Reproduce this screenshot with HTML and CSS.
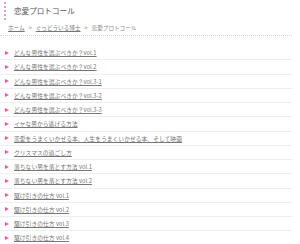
FILE: index.html
```html
<!DOCTYPE html>
<html lang="ja">
<head>
    <meta charset="UTF-8">
    <title>恋愛プロトコール</title>
    <link rel="stylesheet" href="styles.css">
</head>
<body>
    <div class="page">
        <h1 class="cat-title">恋愛プロトコール</h1>

        <div class="breadcrumb">
            <a href="#">ホーム</a>
            <span class="sep">&gt;</span>
            <a href="#">ぐっどういる博士</a>
            <span class="sep">&gt;</span>
            <span class="current">恋愛プロトコール</span>
        </div>

        <ul class="posts">
            <li><a href="#">どんな男性を選ぶべきか？vol.1</a></li>
            <li><a href="#">どんな男性を選ぶべきか？vol.2</a></li>
            <li><a href="#">どんな男性を選ぶべきか？vol.3-1</a></li>
            <li><a href="#">どんな男性を選ぶべきか？vol.3-2</a></li>
            <li><a href="#">どんな男性を選ぶべきか？vol.3-3</a></li>
            <li><a href="#">イヤな男から逃げる方法</a></li>
            <li><a href="#">恋愛をうまくいかせる本、人生をうまくいかせる本、そして映画</a></li>
            <li><a href="#">クリスマスの過ごし方</a></li>
            <li><a href="#">落ちない男を落とす方法 vol.1</a></li>
            <li><a href="#">落ちない男を落とす方法 vol.2</a></li>
            <li><a href="#">駆け引きの仕方 vol.1</a></li>
            <li><a href="#">駆け引きの仕方 vol.2</a></li>
            <li><a href="#">駆け引きの仕方 vol.3</a></li>
            <li><a href="#">駆け引きの仕方 vol.4</a></li>
        </ul>
    </div>
</body>
</html>
```

FILE: styles.css
```css
* {
    box-sizing: border-box;
    margin: 0;
    padding: 0;
}

body {
    background: #fff;
    color: #666;
    font-family: "Noto Sans CJK JP", "Noto Sans", sans-serif;
    overflow: hidden;
}

.page {
    width: 292px;
    padding-top: 2px;
}

/* category heading with the dotted pink bar */
.cat-title {
    margin-left: 4px;
    padding-left: 8px;
    border-left: 2px dotted #e8a0c0;
    font-size: 7.6px;
    font-weight: normal;
    line-height: 18px;
    color: #555;
}

.breadcrumb {
    margin-top: 4px;
    padding: 0 0 3px 8px;
    font-size: 5.6px;
    line-height: 8px;
    color: #888;
    border-bottom: 1px dotted #d4d4d4;
    display: flex;
    gap: 4px;
}

.breadcrumb a {
    color: #777;
}

.posts {
    list-style: none;
    margin-top: 10px;
}

.posts li {
    height: 14.25px;
    border-bottom: 1px solid #eee;
    display: flex;
    align-items: center;
    padding-left: 5px;
    font-size: 5.8px;
}

.posts li::before {
    content: "";
    border-left: 4px solid #f5559f;
    border-top: 2.5px solid transparent;
    border-bottom: 2.5px solid transparent;
    margin-right: 5px;
}

.posts a {
    color: #777;
}
```
